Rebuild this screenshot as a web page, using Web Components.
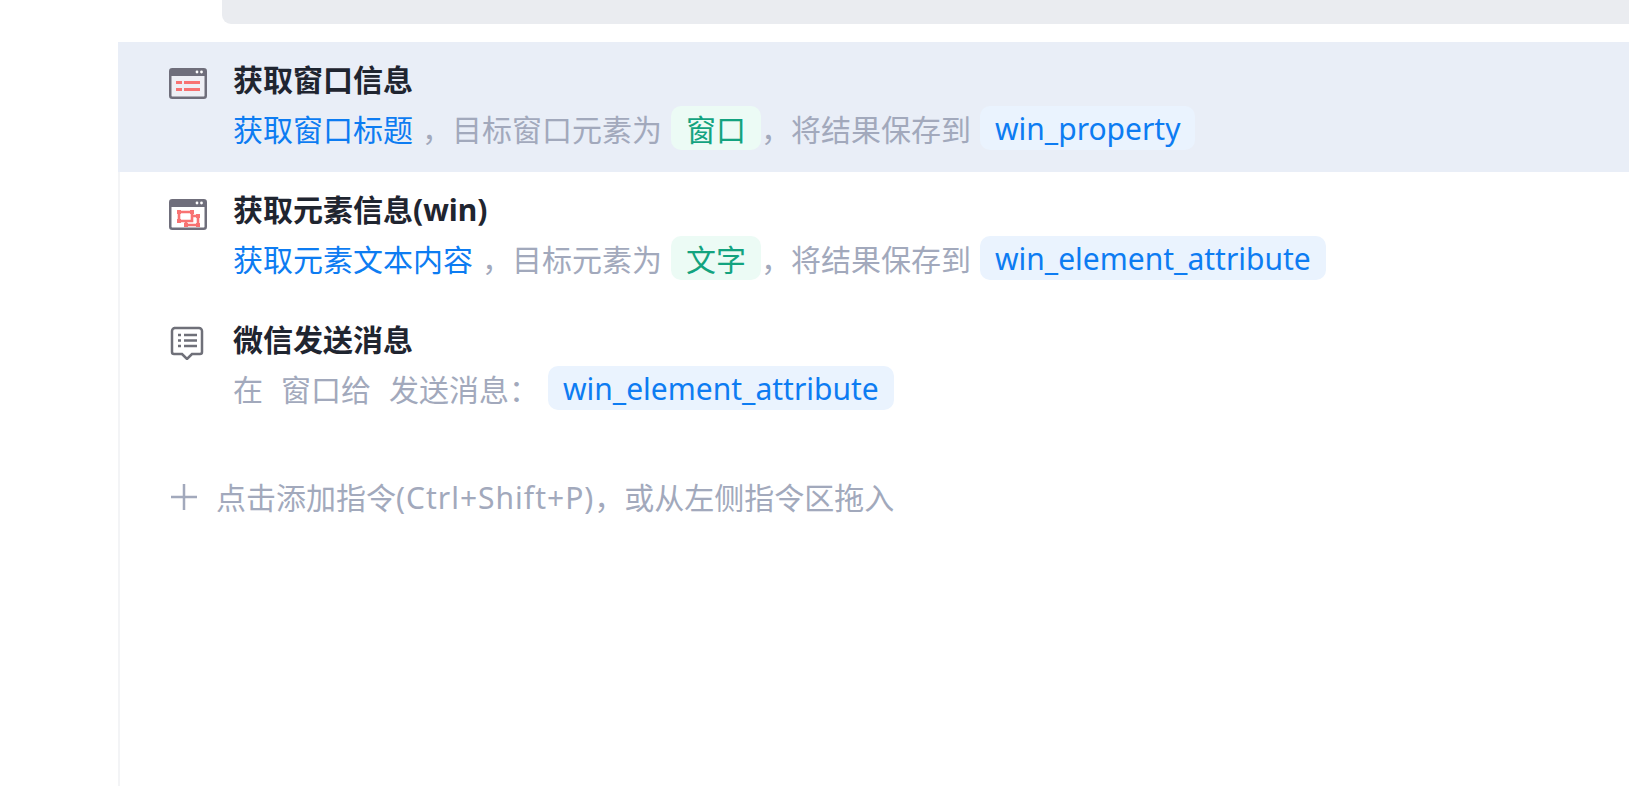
<!DOCTYPE html>
<html lang="zh">
<head>
<meta charset="utf-8">
<title>指令列表</title>
<style>
  html, body {
    margin: 0;
    height: 100%;
    overflow: hidden;
    background: #fff;
    font-family: "Noto Sans", "Noto Sans CJK SC", sans-serif;
  }
</style>
</head>
<body>
<flow-editor>
  <flow-step title="获取窗口信息" icon="window-list" active>
    <step-link>获取窗口标题</step-link>
    <step-text>，目标窗口元素为</step-text>
    <step-chip kind="green">窗口</step-chip>
    <step-text>，将结果保存到</step-text>
    <step-chip>win_property</step-chip>
  </flow-step>
  <flow-step title="获取元素信息(win)" icon="window-element">
    <step-link>获取元素文本内容</step-link>
    <step-text>，目标元素为</step-text>
    <step-chip kind="green">文字</step-chip>
    <step-text>，将结果保存到</step-text>
    <step-chip>win_element_attribute</step-chip>
  </flow-step>
  <flow-step title="微信发送消息" icon="message">
    <step-text gap>在</step-text>
    <step-text gap>窗口给</step-text>
    <step-text>发送消息：</step-text>
    <step-chip>win_element_attribute</step-chip>
  </flow-step>
  <add-step>点击添加指令<span style="letter-spacing:1px">(Ctrl+Shift+P)</span>，或从左侧指令区拖入</add-step>
</flow-editor>

<script>
const ICONS = {
  "window-list": `
    <rect x="1.250" y="1.250" width="35.500" height="28.500" rx="2" fill="#eeeff5" stroke="#6f6e7b" stroke-width="2.500"/>
    <rect x="1" y="1" width="36" height="7" fill="#6f6e7b"/>
    <circle cx="28" cy="4" r="1.400" fill="#fff"/><circle cx="32.500" cy="4" r="1.400" fill="#fff"/>
    <path d="M7 14.500h6M15 14.500h16M7 21.500h6M15 21.500h16" stroke="#f87272" stroke-width="3" fill="none"/>`,
  "window-element": `
    <rect x="1.250" y="1.250" width="35.500" height="28.500" rx="2" fill="#fff" stroke="#6f6e7b" stroke-width="2.500"/>
    <rect x="1" y="1" width="36" height="7" fill="#6f6e7b"/>
    <circle cx="28" cy="4" r="1.400" fill="#fff"/><circle cx="32.500" cy="4" r="1.400" fill="#fff"/>
    <path d="M10 13h13v9H10zM17 22v4h12v-9h-6" stroke="#f87272" stroke-width="2.600" fill="none"/>
    <path d="M8 11h4v4H8zM21 11h4v4h-4zM8 20h4v4H8zM15 24h4v4h-4zM27 15h4v4h-4zM27 24h4v4h-4z" fill="#f87272"/>`,
  "message": `
    <path d="M5 2h25a3 3 0 0 1 3 3v21a2 2 0 0 1-2 2H23l-5 5-5-5H5a2 2 0 0 1-2-2V5a3 3 0 0 1 3-3z" fill="none" stroke="#6f7079" stroke-width="2.500"/>
    <path d="M9 9h3M15 9h13M9 14.500h3M15 14.500h13M9 20h3M15 20h13" stroke="#6f7079" stroke-width="2.400" fill="none"/>`,
};

class FlowEditor extends HTMLElement {
  constructor() {
    super();
    this.attachShadow({ mode: "open" });
    this.shadowRoot.innerHTML = `
      <style>
        :host { display: flex; flex-direction: column; height: 786px; }
        .top {
          height: 24px;
          flex: none;
          margin-left: 222px;
          background: #eaecf0;
          border-bottom-left-radius: 9px;
        }
        .list {
          flex: 1;
          margin: 18px 0 0 118px;
          position: relative;
          border-left: 2px solid #f3f4f6;
        }
      </style>
      <div class="top"></div>
      <div class="list"><slot></slot></div>
    `;
  }
}

class FlowStep extends HTMLElement {
  constructor() {
    super();
    this.attachShadow({ mode: "open" });
  }

  connectedCallback() {
    const icon = this.getAttribute("icon");
    this.shadowRoot.innerHTML = `
      <style>
        :host {
          display: grid;
          grid-template-columns: 38px 1fr;
          column-gap: 26px;
          height: 130px;
          box-sizing: border-box;
          padding: 16px 0 22px 49px;
          font-size: 30px;
          background: transparent;
        }
        :host([active]) { background: #e9eef7; margin-left: -2px; padding-left: 51px; }
        svg { display: block; width: 38px; height: 34px; margin-top: 10px; }
        :host([icon="window-element"]) svg { margin-top: 11px; }
        :host([icon="message"]) svg { margin-top: 8px; }
        .title {
          font-weight: 700;
          line-height: 44px;
          color: #1f2530;
          white-space: nowrap;
        }
        .line {
          display: flex;
          align-items: center;
          height: 44px;
          margin-top: 4px;
          white-space: nowrap;
        }
      </style>
      <svg viewBox="0 0 38 34">${ICONS[icon] || ""}</svg>
      <div>
        <div class="title">${this.getAttribute("title")}</div>
        <div class="line"><slot></slot></div>
      </div>
    `;
  }
}

class StepLink extends HTMLElement {
  constructor() {
    super();
    this.attachShadow({ mode: "open" });
    this.shadowRoot.innerHTML = `
      <style>:host { display: block; color: #0d7cf2; margin-right: 9px; }</style>
      <slot></slot>
    `;
  }
}

class StepText extends HTMLElement {
  constructor() {
    super();
    this.attachShadow({ mode: "open" });
    this.shadowRoot.innerHTML = `
      <style>
        :host { display: block; color: #a2a9bc; }
        :host([gap]) { margin-right: 18px; }
      </style>
      <slot></slot>
    `;
  }
}

class StepChip extends HTMLElement {
  constructor() {
    super();
    this.attachShadow({ mode: "open" });
    this.shadowRoot.innerHTML = `
      <style>
        :host {
          display: flex;
          align-items: center;
          height: 44px;
          margin-left: 9px;
          padding: 0 15px;
          border-radius: 10px;
          background: #eaf3fe;
          color: #0d7cf2;
        }
        :host([kind="green"]) { background: #ecfbf5; color: #13a37f; }
      </style>
      <slot></slot>
    `;
  }
}

class AddStep extends HTMLElement {
  constructor() {
    super();
    this.attachShadow({ mode: "open" });
    this.shadowRoot.innerHTML = `
      <style>
        :host {
          display: flex;
          align-items: center;
          gap: 19px;
          height: 44px;
          margin-top: 42px;
          padding-left: 51px;
          font-size: 30px;
          color: #a2a9bc;
          white-space: nowrap;
        }
        svg { display: block; width: 26px; height: 26px; flex: none; margin-top: 2px; }
        div { display: block; }
      </style>
      <svg viewBox="0 0 26 26"><path d="M0 13h26M13 0v26" stroke="#a2a9bc" stroke-width="2.500" fill="none"/></svg>
      <div><slot></slot></div>
    `;
  }
}

customElements.define("flow-editor", FlowEditor);
customElements.define("flow-step", FlowStep);
customElements.define("step-link", StepLink);
customElements.define("step-text", StepText);
customElements.define("step-chip", StepChip);
customElements.define("add-step", AddStep);
</script>
</body>
</html>
